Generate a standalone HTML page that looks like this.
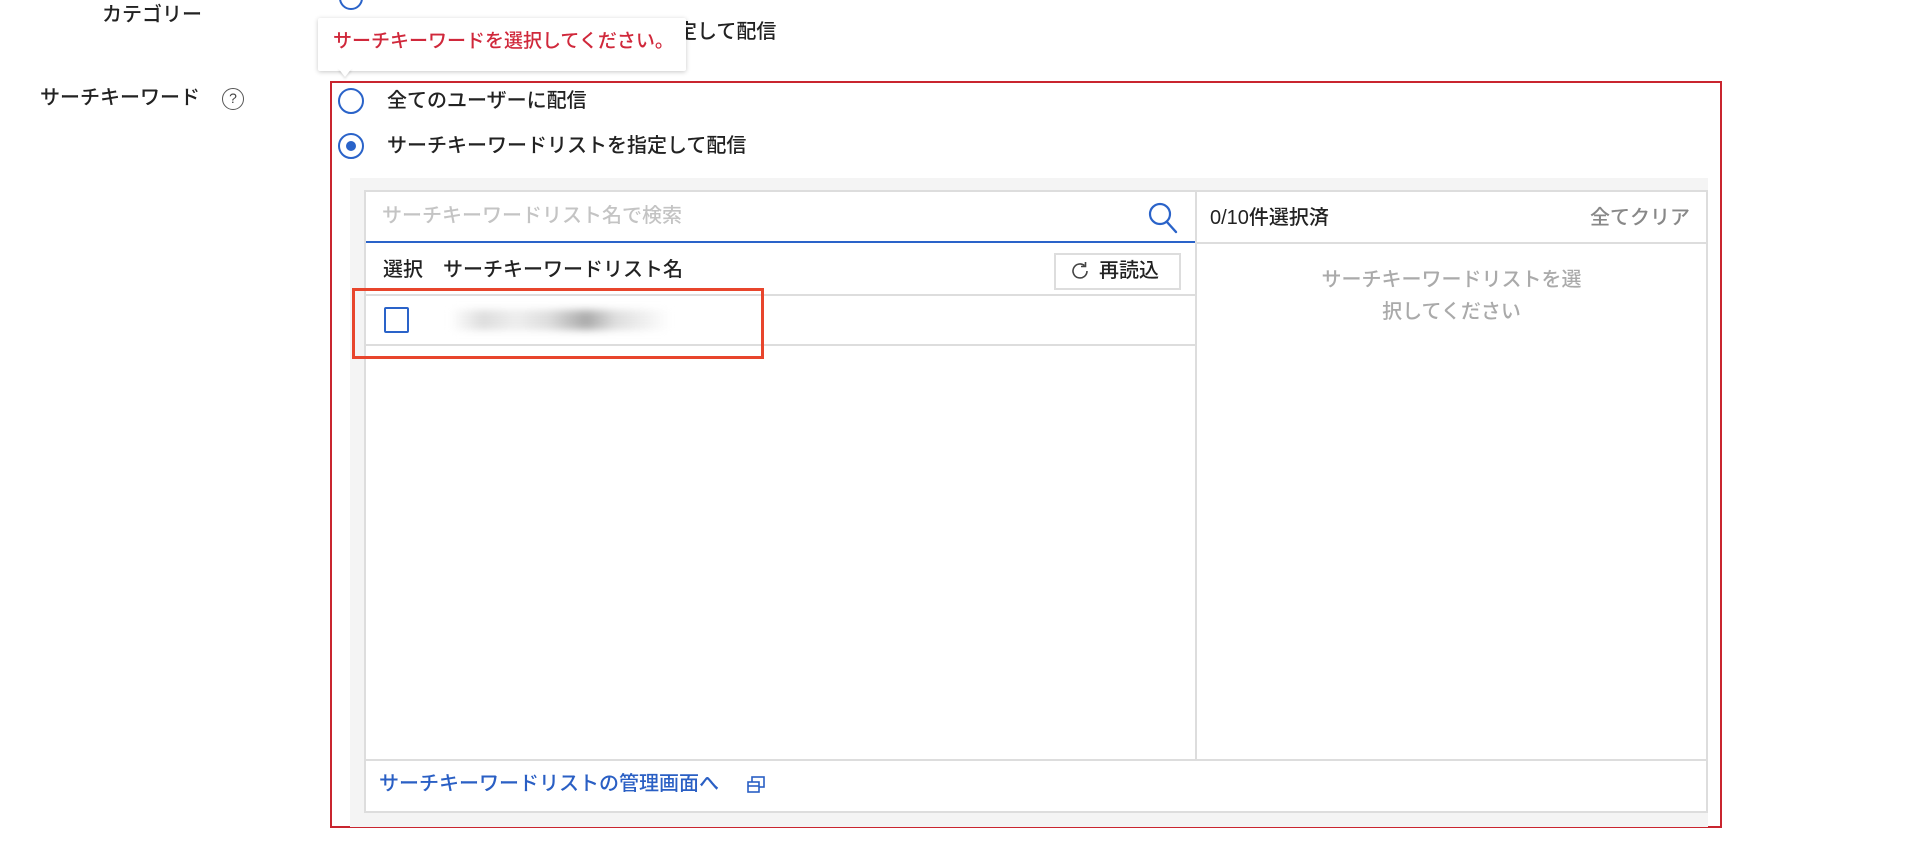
<!DOCTYPE html>
<html><head><meta charset="utf-8"><style>
*{margin:0;padding:0;box-sizing:border-box}
body{width:1924px;height:856px;overflow:hidden;background:#fff;font-family:"Liberation Sans","Noto Sans CJK JP",sans-serif;font-size:20px;font-weight:500;color:#222;position:relative}
.a{position:absolute;white-space:nowrap;line-height:1}
</style></head><body>
<div class="a" style="left:102px;top:5px">カテゴリー</div>
<div class="a" style="left:339px;top:-14px;width:24px;height:24px;border:2px solid #2a63c9;border-radius:50%"></div>
<div class="a" style="left:677px;top:22px">定して配信</div>

<div class="a" style="left:40px;top:88px">サーチキーワード</div>
<div class="a" style="left:222px;top:88px;width:22px;height:22px;border:1.5px solid #555;border-radius:50%;font-size:14px;text-align:center;line-height:19px;color:#444">?</div>

<div class="a" style="left:330px;top:81px;width:1392px;height:747px;border:2px solid #c9252f"></div>

<div class="a" style="left:318px;top:18px;width:368px;height:53px;background:#fff;box-shadow:0 1px 5px rgba(0,0,0,.22);border-radius:2px"></div>
<div class="a" style="left:338px;top:68px;width:0;height:0;border-left:7px solid transparent;border-right:7px solid transparent;border-top:9px solid #fff;filter:drop-shadow(0 2px 1px rgba(0,0,0,.12))"></div>
<div class="a" style="left:333px;top:32px;color:#d0283b;font-size:19px">サーチキーワードを選択してください。</div>

<div class="a" style="left:338px;top:88px;width:26px;height:26px;border:2px solid #2a63c9;border-radius:50%"></div>
<div class="a" style="left:387px;top:91px">全てのユーザーに配信</div>
<div class="a" style="left:338px;top:133px;width:26px;height:26px;border:2px solid #2a63c9;border-radius:50%"></div>
<div class="a" style="left:346px;top:141px;width:10px;height:10px;background:#2a63c9;border-radius:50%"></div>
<div class="a" style="left:387px;top:136px">サーチキーワードリストを指定して配信</div>

<div class="a" style="left:350px;top:178px;width:1358px;height:649px;background:#f4f4f4"></div>
<div class="a" style="left:364px;top:190px;width:1344px;height:623px;background:#fff;border:2px solid #ddd"></div>
<div class="a" style="left:1195px;top:190px;width:2px;height:570px;background:#ddd"></div>
<div class="a" style="left:366px;top:241px;width:829px;height:2px;background:#2a63c9"></div>
<div class="a" style="left:1197px;top:242px;width:509px;height:2px;background:#ddd"></div>
<div class="a" style="left:382px;top:206px;color:#c4c4c4">サーチキーワードリスト名で検索</div>
<svg class="a" style="left:1147px;top:201px" width="32" height="34" viewBox="0 0 32 34"><circle cx="13" cy="13" r="10" fill="none" stroke="#2a63c9" stroke-width="2.2"/><path d="M20 21l9 10" stroke="#2a63c9" stroke-width="2.4" stroke-linecap="round"/></svg>

<div class="a" style="left:1210px;top:208px">0/10件選択済</div>
<div class="a" style="left:1590px;top:208px;color:#888">全てクリア</div>
<div class="a" style="left:1197px;top:270px;width:509px;text-align:center;color:#aaa">サーチキーワードリストを選</div>
<div class="a" style="left:1197px;top:302px;width:509px;text-align:center;color:#aaa">択してください</div>

<div class="a" style="left:383px;top:260px">選択</div>
<div class="a" style="left:443px;top:260px">サーチキーワードリスト名</div>
<div class="a" style="left:1054px;top:253px;width:127px;height:37px;border:2px solid #ddd;background:#fff"></div>
<svg class="a" style="left:1068px;top:259px" width="24" height="24" viewBox="0 0 24 24"><path d="M19 12a7 7 0 1 1-2.5-5.4" fill="none" stroke="#444" stroke-width="1.6"/><path d="M17.5 3v4.5H13" fill="none" stroke="#444" stroke-width="1.6"/></svg>
<div class="a" style="left:1099px;top:261px">再読込</div>

<div class="a" style="left:366px;top:294px;width:829px;height:2px;background:#ddd"></div>
<div class="a" style="left:366px;top:344px;width:829px;height:2px;background:#ddd"></div>
<div class="a" style="left:384px;top:307px;width:25px;height:26px;border:2px solid #2a63c9;border-radius:2px"></div>
<div class="a" style="left:450px;top:310px;width:220px;height:20px;background:linear-gradient(90deg,#fff,#ddd 15%,#eee 30%,#ddd 45%,#aaa 62%,#ddd 75%,#fff);filter:blur(4px)"></div>
<div class="a" style="left:352px;top:288px;width:412px;height:71px;border:3px solid #e8452c"></div>

<div class="a" style="left:366px;top:759px;width:1340px;height:2px;background:#ddd"></div>
<div class="a" style="left:379px;top:774px;color:#2a5fc4">サーチキーワードリストの管理画面へ</div>
<svg class="a" style="left:745px;top:774px" width="22" height="22" viewBox="0 0 22 22"><rect x="7" y="3" width="12" height="10" fill="none" stroke="#2a5fc4" stroke-width="1.6"/><rect x="3" y="8" width="11" height="10" fill="#fff" stroke="#2a5fc4" stroke-width="1.6"/><path d="M3 12h11" stroke="#2a5fc4" stroke-width="1.6"/></svg>
</body></html>
